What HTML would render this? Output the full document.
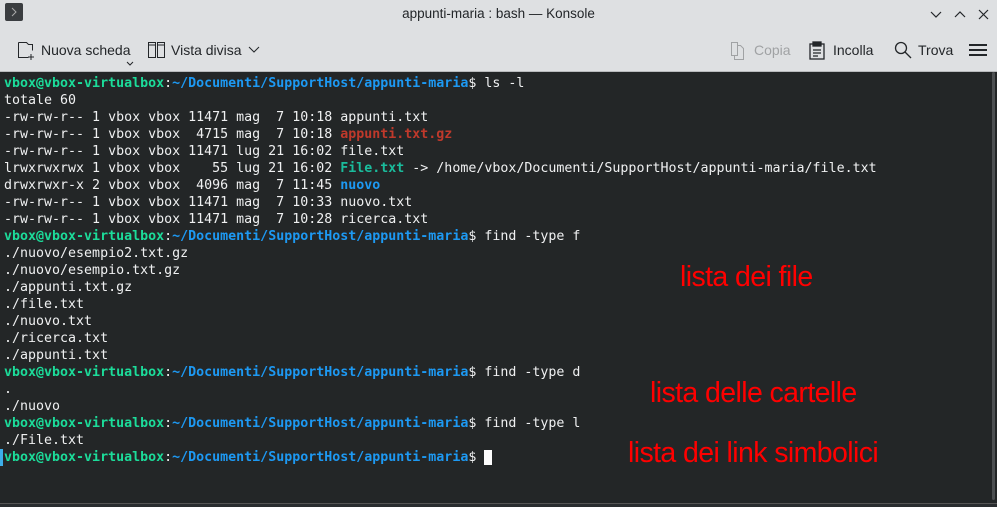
<!DOCTYPE html>
<html><head><meta charset="utf-8"><style>
*{margin:0;padding:0;box-sizing:border-box}
body{width:997px;height:507px;overflow:hidden;background:#232627;font-family:"Liberation Sans",sans-serif;position:relative}
.top{position:absolute;left:0;top:0;width:997px;height:72px;background:#dee0e2;border-bottom:1px solid #b8babc}
.title{position:absolute;top:6px;left:0;width:997px;text-align:center;font-size:13.5px;color:#232629}
.tb{position:absolute;top:42px;font-size:14px;color:#232629}
.term{position:absolute;left:4px;top:75px;font-family:"DejaVu Sans Mono","Liberation Mono",monospace;font-size:13.3px;line-height:17px;color:#eff0f1;white-space:pre}
.g{color:#1cdc9a;font-weight:bold}.b{color:#1d99f3;font-weight:bold}.r{color:#c0392b;font-weight:bold}.gg{color:#1abc9c;font-weight:bold}
.ann{position:absolute;color:#f00;font-size:28.5px;font-family:"Liberation Sans",sans-serif;letter-spacing:-0.6px}
</style></head><body>
<div class="top">
<div style="position:absolute;left:5px;top:3px;width:18px;height:18px;background:#3a3d40;border-radius:2px"><svg width="18" height="18"><path d="M7 5l4 4-4 4" stroke="#aaa" fill="none"/></svg></div>
<div class="title">appunti-maria : bash — Konsole</div>
<svg style="position:absolute;left:930px;top:8px" width="62" height="14" stroke="#232629" fill="none" stroke-width="1.2"><path d="M1 4l5 5 5-5"/><path d="M25 9l5-5 5 5"/><path d="M49 2l9 9M58 2l-9 9"/></svg>
<svg style="position:absolute;left:17px;top:41px" width="18" height="20" stroke="#232629" fill="none"><path d="M1.5 1.5h8l2 2h4v6M1.5 1.5v15h10"/><path d="M14 13v6M11 16h6"/></svg>
<div class="tb" style="left:41px">Nuova scheda</div>
<svg style="position:absolute;left:126px;top:61px" width="8" height="5" stroke="#232629" fill="none"><path d="M1 1l3 3 3-3"/></svg>
<svg style="position:absolute;left:148px;top:42px" width="18" height="17" stroke="#232629" fill="none"><rect x="0.5" y="0.5" width="7" height="15"/><rect x="9.5" y="0.5" width="7" height="15"/><path d="M0.5 3h7M9.5 3h7"/></svg>
<div class="tb" style="left:171px">Vista divisa</div>
<svg style="position:absolute;left:248px;top:46px" width="12" height="8" stroke="#232629" fill="none"><path d="M1 1l5 5 5-5"/></svg>
<svg style="position:absolute;left:731px;top:42px" width="16" height="18" stroke="#a0a2a4" fill="none"><path d="M0.5 0.5h6v13h-6zM6.5 3.5h3l3 3v11h-9v-4"/></svg>
<div class="tb" style="left:754px;color:#a0a2a4">Copia</div>
<svg style="position:absolute;left:809px;top:41px" width="16" height="19" stroke="#232629" fill="none" stroke-width="1.3"><rect x="1" y="3" width="14" height="15"/><rect x="4" y="1" width="8" height="4" fill="#232629"/><path d="M4 9h8M4 12h8M4 15h5"/></svg>
<div class="tb" style="left:833px">Incolla</div>
<svg style="position:absolute;left:894px;top:41px" width="18" height="18" stroke="#232629" fill="none" stroke-width="1.3"><circle cx="7" cy="7" r="5.5"/><path d="M11 11l6 6"/></svg>
<div class="tb" style="left:918px">Trova</div>
<svg style="position:absolute;left:969px;top:43px" width="18" height="14" stroke="#232629" stroke-width="2"><path d="M0 2h18M0 7h18M0 12h18"/></svg>
</div>
<div class="term"><span class="g">vbox@vbox-virtualbox</span>:<span class="b">~/Documenti/SupportHost/appunti-maria</span>$ ls -l
totale 60
-rw-rw-r-- 1 vbox vbox 11471 mag  7 10:18 appunti.txt
-rw-rw-r-- 1 vbox vbox  4715 mag  7 10:18 <span class="r">appunti.txt.gz</span>
-rw-rw-r-- 1 vbox vbox 11471 lug 21 16:02 file.txt
lrwxrwxrwx 1 vbox vbox    55 lug 21 16:02 <span class="gg">File.txt</span> -&gt; /home/vbox/Documenti/SupportHost/appunti-maria/file.txt
drwxrwxr-x 2 vbox vbox  4096 mag  7 11:45 <span class="b">nuovo</span>
-rw-rw-r-- 1 vbox vbox 11471 mag  7 10:33 nuovo.txt
-rw-rw-r-- 1 vbox vbox 11471 mag  7 10:28 ricerca.txt
<span class="g">vbox@vbox-virtualbox</span>:<span class="b">~/Documenti/SupportHost/appunti-maria</span>$ find -type f
./nuovo/esempio2.txt.gz
./nuovo/esempio.txt.gz
./appunti.txt.gz
./file.txt
./nuovo.txt
./ricerca.txt
./appunti.txt
<span class="g">vbox@vbox-virtualbox</span>:<span class="b">~/Documenti/SupportHost/appunti-maria</span>$ find -type d
.
./nuovo
<span class="g">vbox@vbox-virtualbox</span>:<span class="b">~/Documenti/SupportHost/appunti-maria</span>$ find -type l
./File.txt
<span class="g">vbox@vbox-virtualbox</span>:<span class="b">~/Documenti/SupportHost/appunti-maria</span>$ <span style="background:#fcfcfc"> </span></div>
<div style="position:absolute;left:0;top:449px;width:3px;height:17px;background:#3daee9"></div>
<div style="position:absolute;left:992px;top:72px;width:3px;height:428px;background:#4d5052;border-radius:2px"></div>
<div style="position:absolute;left:0;top:503px;width:997px;height:4px;background:#2a2d2f;border-top:1px solid #555"></div>
<div class="ann" style="left:680px;top:261px">lista dei file</div>
<div class="ann" style="left:650px;top:377px">lista delle cartelle</div>
<div class="ann" style="left:628px;top:437px">lista dei link simbolici</div>
</body></html>
